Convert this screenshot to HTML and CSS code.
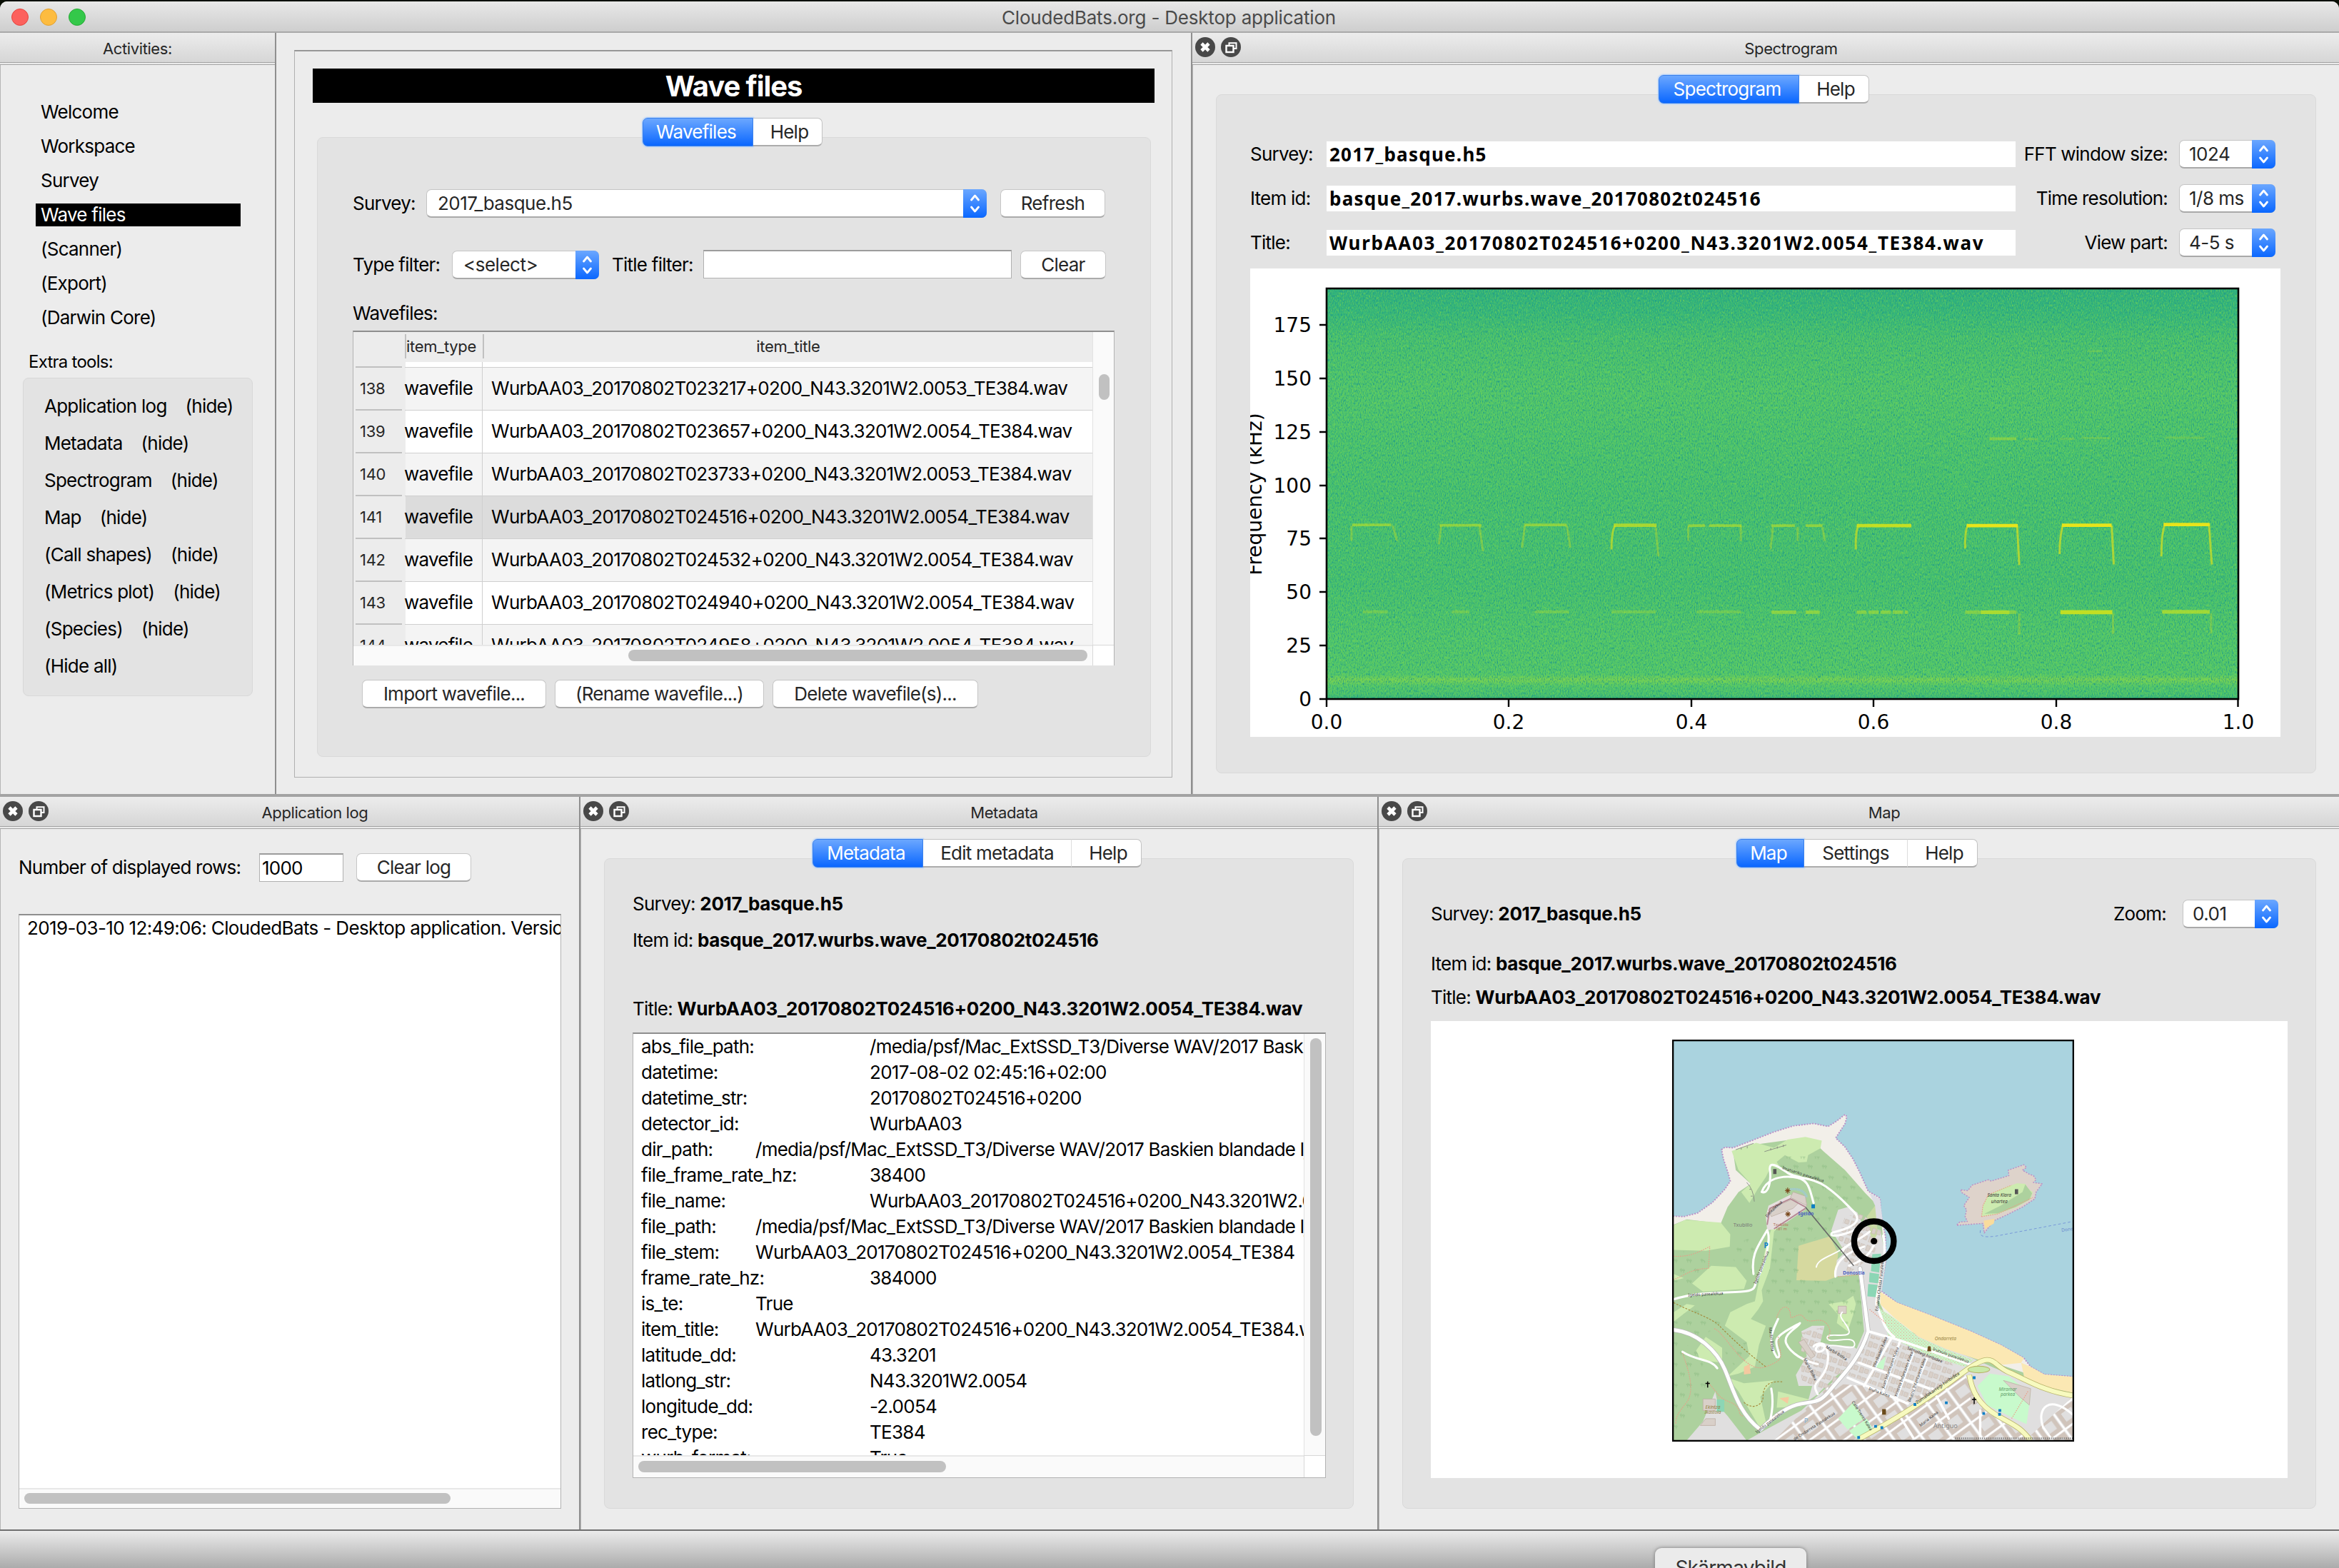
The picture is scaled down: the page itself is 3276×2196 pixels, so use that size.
FILE: index.html
```
<!DOCTYPE html>
<html lang="en">
<head>
<meta charset="utf-8">
<title>CloudedBats.org - Desktop application</title>
<link rel="stylesheet" href="styles.css">
</head>
<body>
<svg width="0" height="0" class="defs">
  <defs>
    <symbol id="close" viewBox="0 0 28 28"><circle cx="14" cy="14" r="14" fill="#484848"/><path d="M9 9 L19 19 M19 9 L9 19" stroke="#fff" stroke-width="4.6"/></symbol>
    <symbol id="float" viewBox="0 0 28 28"><circle cx="14" cy="14" r="14" fill="#484848"/><path d="M11.5 11 V8.2 H21.5 V16 H18" fill="none" stroke="#fff" stroke-width="2"/><rect x="7.5" y="12" width="10" height="9" fill="none" stroke="#fff" stroke-width="2.4"/></symbol>
    <symbol id="updown" viewBox="0 0 33 40"><path d="M11.5 15 L16.5 9 L21.5 15 M11.5 25 L16.5 31 L21.5 25" fill="none" stroke="#fff" stroke-width="2.8" stroke-linecap="round" stroke-linejoin="round"/></symbol>
  </defs>
</svg>
<div class="window">
  <header class="titlebar"><span class="lights"><i class="red"></i><i class="amber"></i><i class="green"></i></span><span class="title">CloudedBats.org - Desktop application</span></header>

  <div class="top">
    <aside class="activities">
      <div class="dock-head"><span>Activities:</span></div>
      <div class="side-body">
        <ul class="nav"><li>Welcome</li><li>Workspace</li><li>Survey</li><li class="on">Wave files</li><li>(Scanner)</li><li>(Export)</li><li>(Darwin Core)</li></ul>
        <div class="extra-label">Extra tools:</div>
        <ul class="extra"><li><span>Application log</span><span>(hide)</span></li><li><span>Metadata</span><span>(hide)</span></li><li><span>Spectrogram</span><span>(hide)</span></li><li><span>Map</span><span>(hide)</span></li><li><span>(Call shapes)</span><span>(hide)</span></li><li><span>(Metrics plot)</span><span>(hide)</span></li><li><span>(Species)</span><span>(hide)</span></li><li><span>(Hide all)</span></li></ul>
      </div>
    </aside>

    <main class="work">
      <div class="frame">
        <h1>Wave files</h1>
        <div class="tabs"><span class="tab on w155">Wavefiles</span><span class="tab w97">Help</span></div>
        <section class="group wave">
          <div class="row r1"><label>Survey:</label><div class="select wide"><span>2017_basque.h5</span><svg class="arrows"><use href="#updown"/></svg></div><button class="w147">Refresh</button></div>
          <div class="row r2"><label>Type filter:</label><div class="select type"><span>&lt;select&gt;</span><svg class="arrows"><use href="#updown"/></svg></div><label class="tf">Title filter:</label><div class="input filter"></div><button class="w120">Clear</button></div>
          <div class="cap">Wavefiles:</div>
          <div class="table">
            <div class="thead"><span class="c0"></span><span class="c1">item_type</span><span class="c2">item_title</span></div>
            <div class="tbody">
              <div class="tr gap"><span class="c0"></span><span class="c1"></span><span class="c2"></span></div>
              <div class="tr alt"><span class="c0">138</span><span class="c1">wavefile</span><span class="c2">WurbAA03_20170802T023217+0200_N43.3201W2.0053_TE384.wav</span></div>
              <div class="tr"><span class="c0">139</span><span class="c1">wavefile</span><span class="c2">WurbAA03_20170802T023657+0200_N43.3201W2.0054_TE384.wav</span></div>
              <div class="tr alt"><span class="c0">140</span><span class="c1">wavefile</span><span class="c2">WurbAA03_20170802T023733+0200_N43.3201W2.0053_TE384.wav</span></div>
              <div class="tr sel"><span class="c0">141</span><span class="c1">wavefile</span><span class="c2">WurbAA03_20170802T024516+0200_N43.3201W2.0054_TE384.wav</span></div>
              <div class="tr alt"><span class="c0">142</span><span class="c1">wavefile</span><span class="c2">WurbAA03_20170802T024532+0200_N43.3201W2.0054_TE384.wav</span></div>
              <div class="tr"><span class="c0">143</span><span class="c1">wavefile</span><span class="c2">WurbAA03_20170802T024940+0200_N43.3201W2.0054_TE384.wav</span></div>
              <div class="tr alt"><span class="c0">144</span><span class="c1">wavefile</span><span class="c2">WurbAA03_20170802T024958+0200_N43.3201W2.0054_TE384.wav</span></div>
            </div>
            <div class="vbar"><i></i></div>
            <div class="hbar"><i></i></div>
            <div class="corner"></div>
          </div>
          <div class="row r3"><button class="w258">Import wavefile...</button><button class="w293">(Rename wavefile...)</button><button class="w288">Delete wavefile(s)...</button></div>
        </section>
      </div>
    </main>

    <section class="dock spec">
      <div class="dock-head"><svg class="ic"><use href="#close"/></svg><svg class="ic"><use href="#float"/></svg><span>Spectrogram</span></div>
      <div class="dock-body">
        <div class="tabs"><span class="tab on w197">Spectrogram</span><span class="tab w98">Help</span></div>
        <div class="group specg">
          <div class="row"><label>Survey:</label><div class="field">2017_basque.h5</div><label class="rl">FFT window size:</label><div class="select small"><span>1024</span><svg class="arrows"><use href="#updown"/></svg></div></div>
          <div class="row"><label>Item id:</label><div class="field">basque_2017.wurbs.wave_20170802t024516</div><label class="rl">Time resolution:</label><div class="select small"><span>1/8 ms</span><svg class="arrows"><use href="#updown"/></svg></div></div>
          <div class="row"><label>Title:</label><div class="field long">WurbAA03_20170802T024516+0200_N43.3201W2.0054_TE384.wav</div><label class="rl">View part:</label><div class="select small"><span>4-5 s</span><svg class="arrows"><use href="#updown"/></svg></div></div>
          <svg class="plot" viewBox="1751 376 1443 656" width="1443" height="656">
            <defs>
              <linearGradient id="bg" x1="0" y1="0" x2="0" y2="1">
                <stop offset="0" stop-color="#2fb27c"/><stop offset=".06" stop-color="#37b878"/><stop offset=".12" stop-color="#48c16e"/><stop offset=".25" stop-color="#52c76a"/><stop offset=".5" stop-color="#48c26d"/><stop offset=".72" stop-color="#46c16e"/><stop offset=".85" stop-color="#51c76a"/><stop offset=".94" stop-color="#54c868"/><stop offset=".953" stop-color="#78d352"/><stop offset=".968" stop-color="#54c868"/><stop offset=".99" stop-color="#48c16e"/><stop offset="1" stop-color="#2fae7d"/>
              </linearGradient>
              <filter id="dark" x="0" y="0" width="1" height="1" color-interpolation-filters="sRGB"><feTurbulence type="fractalNoise" baseFrequency=".75 .3" numOctaves="2" seed="4"/><feColorMatrix values="0 0 0 0 .12  0 0 0 0 .6  0 0 0 0 .54  2.5 0 0 0 -1.15"/></filter>
              <filter id="lite" x="0" y="0" width="1" height="1" color-interpolation-filters="sRGB"><feTurbulence type="fractalNoise" baseFrequency=".7 .3" numOctaves="2" seed="9"/><feColorMatrix values="0 0 0 0 .5  0 0 0 0 .84  0 0 0 0 .3  1.8 0 0 0 -.82"/></filter>
            </defs>
            <rect x="1751" y="376" width="1443" height="656" fill="#fff"/>
            <rect x="1858" y="404" width="1277" height="575" fill="url(#bg)"/>
            <rect x="1858" y="404" width="1277" height="575" filter="url(#lite)"/>
            <rect x="1858" y="404" width="1277" height="575" filter="url(#dark)"/>
            <g transform="translate(1700 360) scale(.9949 .4847)" fill="none" stroke="#d8e219">
              <g stroke-width="8" stroke-opacity=".65"><path d="M195 774H250M318 775H377M437 774H497M668 776H692M697 776H743M785 776H818M833 776H857" stroke="#b5de2b"/></g>
              <g stroke-width="10"><path d="M563 775H623" stroke="#c2df23" stroke-opacity=".8"/><path d="M905 776H982" stroke="#d2e21b" stroke-opacity=".9"/><path d="M1060 776H1132M1194 775H1264M1337 773H1402" stroke="#e8e41b"/></g>
              <g stroke-width="3" stroke-opacity=".35"><path d="M194 776V820M252 776L258 820M320 776L317 830M374 776L379 850M438 776L434 840M497 776L502 840M622 776L626 865M668 776V820M742 776V820M787 780L784 845M822 780V820M857 780L860 820"/></g>
              <g stroke-width="3" stroke-opacity=".65"><path d="M565 776Q560 790 560 845M907 778Q903 800 904 845M1061 776Q1057 800 1058 842"/><path d="M1131 778L1134 890M1195 776Q1190 820 1191 858M1264 776L1267 888M1339 772Q1334 800 1334 865M1401 772L1405 888" stroke="#e5e419"/></g>
              <g stroke-width="9" stroke="#a5db36"><path d="M210 1025H245M335 1025H360M452 1025H500M560 1025H622M680 1025H742" stroke-opacity=".4"/><path d="M785 1026H820M833 1026H853" stroke-opacity=".7" stroke-width="10"/><path d="M905 1026H977" stroke-dasharray="14 3" stroke-width="10" stroke-opacity=".65"/><path d="M1058 1026H1130" stroke-opacity=".6" stroke-width="10"/><path d="M1080 1026H1120M1335 1025H1402" stroke="#b5de2b" stroke-width="11" stroke-opacity=".8"/><path d="M1192 1026H1265" stroke="#c2df23" stroke-width="12"/></g>
              <g stroke-width="8" stroke="#a5db36"><path d="M1092 525H1130" stroke-opacity=".6"/><path d="M1192 525H1212M1222 523H1262M1340 522H1395M1230 272H1250M1140 526H1160" stroke-opacity=".3" stroke-width="6"/></g>
              <path d="M1134 1030V1090M1266 1030V1090M1404 1030V1088" stroke-width="3" stroke-opacity=".3"/>
            </g>
            <rect x="1858" y="404" width="1277" height="575" fill="none" stroke="#000" stroke-width="2.6"/>
            <path d="M1848 979H1858M1848 904H1858M1848 829H1858M1848 754H1858M1848 680H1858M1848 605H1858M1848 530H1858M1848 455H1858M1858 979V990M2113 979V990M2369 979V990M2624 979V990M2880 979V990M3134.5 979V990" stroke="#000" stroke-width="2.4"/>
            <g class="tick" text-anchor="end"><text x="1837" y="989">0</text><text x="1837" y="914">25</text><text x="1837" y="839">50</text><text x="1837" y="764">75</text><text x="1837" y="690">100</text><text x="1837" y="615">125</text><text x="1837" y="540">150</text><text x="1837" y="465">175</text></g>
            <g class="tick" text-anchor="middle"><text x="1858" y="1021">0.0</text><text x="2113" y="1021">0.2</text><text x="2369" y="1021">0.4</text><text x="2624" y="1021">0.6</text><text x="2880" y="1021">0.8</text><text x="3135" y="1021">1.0</text><text transform="translate(1767 692) rotate(-90)">Frequency (kHz)</text></g>
          </svg>
        </div>
      </div>
    </section>
  </div>

  <div class="bottom">
    <section class="dock log">
      <div class="dock-head"><svg class="ic"><use href="#close"/></svg><svg class="ic"><use href="#float"/></svg><span>Application log</span></div>
      <div class="dock-body">
        <div class="row"><label>Number of displayed rows:</label><div class="input rows">1000</div><button class="w161">Clear log</button></div>
        <div class="loglist"><p>2019-03-10 12:49:06: CloudedBats - Desktop application. Version</p><div class="hbar"><i></i></div></div>
      </div>
    </section>

    <section class="dock meta">
      <div class="dock-head"><svg class="ic"><use href="#close"/></svg><svg class="ic"><use href="#float"/></svg><span>Metadata</span></div>
      <div class="dock-body">
        <div class="tabs"><span class="tab on w155">Metadata</span><span class="tab sep w208">Edit metadata</span><span class="tab w98">Help</span></div>
        <div class="group metag">
          <p class="m1">Survey: <b>2017_basque.h5</b></p>
          <p class="m2">Item id: <b>basque_2017.wurbs.wave_20170802t024516</b></p>
          <p class="m3">Title: <b>WurbAA03_20170802T024516+0200_N43.3201W2.0054_TE384.wav</b></p>
          <div class="text">
<pre>abs_file_path:	/media/psf/Mac_ExtSSD_T3/Diverse WAV/2017 Baskien
datetime:		2017-08-02 02:45:16+02:00
datetime_str:		20170802T024516+0200
detector_id:		WurbAA03
dir_path:	/media/psf/Mac_ExtSSD_T3/Diverse WAV/2017 Baskien blandade lj
file_frame_rate_hz:	38400
file_name:		WurbAA03_20170802T024516+0200_N43.3201W2.0054
file_path:	/media/psf/Mac_ExtSSD_T3/Diverse WAV/2017 Baskien blandade lj
file_stem:	WurbAA03_20170802T024516+0200_N43.3201W2.0054_TE384
frame_rate_hz:	384000
is_te:	True
item_title:	WurbAA03_20170802T024516+0200_N43.3201W2.0054_TE384.wav
latitude_dd:		43.3201
latlong_str:		N43.3201W2.0054
longitude_dd:		-2.0054
rec_type:		TE384
wurb_format:		True</pre>
            <div class="vbar"><i></i></div><div class="hbar"><i></i></div><div class="corner"></div>
          </div>
        </div>
      </div>
    </section>

    <section class="dock mapd">
      <div class="dock-head"><svg class="ic"><use href="#close"/></svg><svg class="ic"><use href="#float"/></svg><span>Map</span></div>
      <div class="dock-body">
        <div class="tabs"><span class="tab on w95">Map</span><span class="tab sep w145">Settings</span><span class="tab w98">Help</span></div>
        <div class="group mapg">
          <div class="row"><p>Survey: <b>2017_basque.h5</b></p><label>Zoom:</label><div class="select small"><span>0.01</span><svg class="arrows"><use href="#updown"/></svg></div></div>
          <p class="p2">Item id: <b>basque_2017.wurbs.wave_20170802t024516</b></p>
          <p class="p3">Title: <b>WurbAA03_20170802T024516+0200_N43.3201W2.0054_TE384.wav</b></p>
          <div class="canvas">
            <svg class="map" viewBox="57 42 1472 1472" width="563" height="563">
              <defs>
                <pattern id="trees" width="52" height="76" patternUnits="userSpaceOnUse"><path d="M10 22v-8M6 14a4 5 0 1 1 8 0zM20 24v-8M16 16a4 5 0 1 1 8 0zM38 58v-8M34 50a4 5 0 1 1 8 0zM47 60v-8M43 52a4 5 0 1 1 8 0z" fill="none" stroke="#8dbc82" stroke-width="1.6"/></pattern>
                <pattern id="dots" width="11" height="11" patternUnits="userSpaceOnUse"><circle cx="3" cy="3" r="2" fill="#eb9c8c"/><circle cx="8" cy="9" r="1.6" fill="#eb9c8c"/></pattern>
                <pattern id="blocks" width="41" height="33" patternUnits="userSpaceOnUse" patternTransform="rotate(19)"><rect x="4" y="5" width="13" height="20" fill="#d9d0c9" stroke="#c2b5aa" stroke-width="1.5"/><rect x="22" y="7" width="14" height="15" fill="#d9d0c9" stroke="#c2b5aa" stroke-width="1.5"/></pattern>
                <pattern id="bigblocks" width="88" height="74" patternUnits="userSpaceOnUse" patternTransform="rotate(-36)"><rect width="88" height="74" fill="#e0dfdf"/><path d="M8 8H68V58H8Z" fill="none" stroke="#d0c4bb" stroke-width="15"/><path d="M0 70H88M82 0V74" stroke="#fff" stroke-width="7"/></pattern>
                <clipPath id="box"><rect x="62" y="47" width="1462" height="1462"/></clipPath>
              </defs>
              <g clip-path="url(#box)" stroke-linejoin="round">
                <rect x="57" y="42" width="1472" height="1472" fill="#aad3df"/>
                <path d="M50 688L100 690 150 677 205 638 250 590 270 560 262 530 245 480 238 445 250 436 280 438 340 415 430 380 500 358 575 349 628 360 660 340 690 316 697 324 690 350 656 402 690 435 720 480 745 530 775 597 818 622 822 680 838 760 840 850 822 962 880 1005 1000 1050 1150 1110 1260 1160 1345 1208 1370 1240 1420 1268 1540 1277V1520H50Z" fill="#f2efe9" stroke="#bb8fc6" stroke-width="5" stroke-dasharray="5 5"/>
                <path d="M62 720L110 700 235 715 260 655 300 600 345 570 290 520 280 450 370 425 480 410 545 400 600 440 610 450 690 520 765 605 800 640 822 700 838 850 815 1000 850 1080 1160 1200 1340 1260 1524 1330V1510H62Z" fill="#add19e"/>
                <path d="M275 450L365 420 430 438 480 408 545 398 605 412 600 440 555 465 550 490 520 492 470 465 440 490 455 515 420 505 400 545 370 590 340 640 310 600 345 570 300 520ZM62 722L105 702 235 712 270 755 268 800 180 815 62 812ZM62 900L100 915 62 925ZM130 935L200 870 290 875 330 925 320 955 170 965ZM425 720L480 690 430 745 415 880 385 960 390 1000 372 1030 345 1065 400 1090 375 1160 360 1240 300 1265 260 1275 340 1200 330 1150 250 1090 270 1040 330 1010 360 1000 400 800ZM62 1040L110 1010 140 1015 62 1075ZM145 1180L180 1130 240 1170 240 1225 160 1215ZM630 1010L690 1000 720 980 730 1010 720 1050 700 1110 660 1080 665 1050ZM260 1280L320 1300 430 1290 380 1350 400 1440 385 1475 300 1330ZM445 1330L560 1360 530 1385 440 1390Z" fill="#cdebb0"/>
                <path d="M520 797L635 762 665 825 655 912 620 925 512 923Z" fill="#d6d99f"/>
                <path d="M640 740L665 665 700 655 735 675 755 720 820 740 840 850 825 960 805 1020 850 1080 1160 1210 1340 1290 1524 1340V1510H110L170 1440 215 1330 225 1380 260 1420 330 1510 400 1470 530 1400 640 1300 700 1250 760 1110 740 900 655 910 660 850 690 820ZM530 1110L570 1090 615 1090 600 1150 640 1160 720 1165 740 1180 700 1240 650 1280 590 1340 555 1365 570 1310 520 1310 510 1270 550 1200Z" fill="#e0dfdf"/>
                <path d="M400 690L410 650 490 610 550 640 545 665 440 735 405 740Z" fill="#e6dfdf"/>
                <path d="M780 605L818 625 828 705 795 700 800 650Z" fill="#dedde6"/><path d="M770 690L800 650 810 750 790 790Z" fill="#c9dba4"/>
                <path d="M62 820L130 815 200 870 130 935 62 930ZM268 800L360 760 350 900 290 875ZM62 1075L140 1015 250 1090 145 1130ZM240 1170L330 1150 300 1260ZM62 1130L145 1180 200 1290 130 1420 62 1490Z" fill="url(#trees)"/><path d="M460 470H620L770 620 650 660 620 750 520 800V920L650 930 740 900 760 1100 600 1060 400 980 430 760 600 690 560 560 450 530Z" fill="url(#trees)"/>
                <path d="M780 1120L1080 1225 1100 1270 960 1370 700 1270Z" fill="url(#blocks)"/><path d="M665 770L690 690 750 680 830 740 800 830 700 900Z" fill="url(#blocks)"/><path d="M530 1115L610 1095 600 1180 720 1180 700 1240 620 1330 530 1290Z" fill="url(#blocks)"/>
                <path d="M640 1300L760 1310 900 1370 1130 1270 1200 1400 1360 1500 1524 1350V1510H430L520 1420Z" fill="url(#bigblocks)"/>
                <path d="M818 965L880 1005 1000 1050 1150 1110 1260 1160 1345 1208 1335 1226 1270 1232 1190 1218 1060 1175 960 1130 870 1060 820 1012ZM1335 1225L1370 1240 1420 1268 1524 1277V1335L1350 1297Z" fill="#fbe8b3"/>
                <path d="M815 1025L870 1062 960 1132 1060 1177 1160 1215 1130 1240 1000 1200 850 1130Z" fill="#c8facc"/><path d="M815 1025L870 1062 960 1132 1060 1177 1160 1215 1130 1240 1000 1200 850 1130Z" fill="url(#dots)"/>
                <path d="M1175 1310L1220 1265 1290 1275 1370 1340 1355 1450 1310 1430 1210 1380ZM665 1430L720 1370 760 1430 700 1470ZM705 1475L770 1430 800 1480 740 1510ZM800 1240L840 1200 830 1250Z" fill="#c8facc"/>
                <path d="M790 828L822 826 815 895 785 890ZM780 895L815 900 812 935 778 930ZM775 937L810 940 805 985 772 982ZM220 1360H248V1405H220Z" fill="#8cd6b5"/>
                <path d="M170 1358H215V1400H170ZM180 1430H215V1455H160ZM410 665L500 625 520 640 500 660 420 690ZM1270 1290L1370 1320 1365 1380 1330 1350ZM1148 1345L1180 1340 1185 1365 1160 1380ZM665 1018H695V1045H665ZM520 1150L540 1140 580 1200 565 1210ZM500 600L545 615 550 650 490 620Z" fill="#d9d0c9" stroke="#bcaea3" stroke-width="2"/>
                <path d="M320 1240L340 1230 345 1265 320 1268ZM450 1355L485 1350 480 1375Z" fill="#f5c9a0"/>
                <g fill="none" stroke="#bbb" stroke-linecap="round"><path d="M62 1105C150 1115 220 1180 250 1250S300 1410 380 1470C410 1440 470 1385 530 1375S600 1370 640 1320 740 1220 775 1110L745 880" stroke-width="17"/></g>
                <g fill="none" stroke="#fff" stroke-linecap="round">
                  <path d="M62 1105C150 1115 220 1180 250 1250S300 1410 380 1470C410 1440 470 1385 530 1375S600 1370 640 1320 740 1220 775 1110L745 880" stroke-width="13"/>
                  <path d="M62 993C150 965 240 970 310 965S350 940 375 905C400 850 420 770 405 740M405 740C370 800 345 830 355 900M385 600C400 560 440 540 500 545S560 590 575 640M385 600C410 610 420 560 415 520S450 510 480 530 570 545 620 580 690 640 720 670 730 720 690 735 640 745 640 755 700 760 760 720M445 1065C430 1100 400 1140 440 1205C465 1210 430 1160 440 1140S480 1105 525 1080C520 1095 460 1120 475 1155S540 1220 590 1230M575 1165C590 1150 620 1150 615 1170S575 1190 585 1170 640 1160 625 1230 560 1290 590 1340M680 820C690 790 740 780 780 745M705 870C760 850 790 820 800 780M655 910C650 870 670 830 760 800M95 1185C150 1220 200 1210 222 1245M420 1320C430 1370 420 1420 415 1440M1524 1415C1440 1340 1390 1390 1415 1460L1450 1510" stroke-width="8"/>
                  <path d="M680 1040C660 1060 700 1080 705 1110S620 1110 625 1135 720 1120 725 1155 650 1150 630 1165M585 875C590 840 660 830 690 800" stroke-width="5"/>
                  <path d="M775 1110L880 1140 1160 1235M740 1225L1000 1320M700 1280L920 1375M860 1135L760 1310M890 1150L830 1330M940 1190L880 1350M990 1210L930 1350M1010 1320L1070 1430M890 1420L940 1500M1185 1400V1510M805 1010C830 1080 840 1110 870 1130M830 760C850 850 805 940 805 1010" stroke-width="9"/>
                </g>
                <path d="M740 1505C860 1440 980 1370 1110 1270S1220 1230 1290 1260 1420 1330 1524 1345M1145 1270C1155 1330 1180 1380 1250 1420S1330 1460 1370 1510" fill="none" stroke="#b9b56b" stroke-width="20"/><path d="M740 1505C860 1440 980 1370 1110 1270S1220 1230 1290 1260 1420 1330 1524 1345M1145 1270C1155 1330 1180 1380 1250 1420S1330 1460 1370 1510" fill="none" stroke="#f7fabf" stroke-width="16"/>
                <ellipse cx="1180" cy="1250" rx="40" ry="12" fill="#c8e9a8" stroke="#b9b56b" stroke-width="3"/>
                <g fill="none" stroke="#ec9a86" stroke-width="3" stroke-dasharray="4 4"><path d="M62 835C130 840 170 810 195 800L190 880C120 880 90 915 62 920M440 1060C460 1000 490 1020 490 1050S520 1030 540 1060 600 1050 625 1085 620 1130 630 1140M95 1190C120 1260 140 1330 110 1370S70 1420 70 1450M190 1300C230 1340 220 1350 270 1370S290 1420 320 1420M445 1130C450 1200 480 1210 400 1240S250 1110 210 1100M665 910L740 903M780 1030L840 1080M1360 1330L1300 1430"/></g>
                <g fill="none" stroke="#a3893a" stroke-width="3" stroke-dasharray="7 5"><path d="M62 1005C130 1040 200 1060 230 1090S320 1180 400 1240M320 1370C350 1400 390 1380 390 1350S400 1290 460 1295"/></g>
                <path d="M405 720L415 660 490 625 545 655M430 735L545 660" fill="none" stroke="#b58a94" stroke-width="5"/>
                <path d="M490 590Q540 585 550 620" fill="none" stroke="#9fc9d6" stroke-width="9" stroke-dasharray="4 2"/>
                <path d="M545 655L722 870" stroke="#666" stroke-width="4"/>
                <g fill="none" stroke="#777" stroke-width="2"><path d="M290 445L355 422M395 452L475 428M330 565Q355 590 358 635M310 445v-8M332 440v-8M418 447v-8M442 441v-8M464 435v-8M340 590h6M345 615h7"/></g>
                <path d="M1115 592L1140 595 1155 575 1215 555 1225 560 1290 540 1288 520 1345 500 1355 510 1340 520 1365 535 1380 540 1390 555 1380 565 1412 570 1390 600 1385 625 1340 655 1280 685 1235 705 1200 750 1195 715 1098 722 1110 710 1138 708 1130 690 1135 665 1125 650 1145 620 1115 600Z" fill="#ded3cb" stroke="#bb8fc6" stroke-width="4" stroke-dasharray="5 5"/>
                <path d="M1190 690L1195 650 1215 610 1270 585 1320 568 1350 570 1362 590 1378 600 1370 625 1320 655 1250 680Z" fill="#cdebb0"/><path d="M1200 680L1260 650 1340 600 1350 572 1375 605 1365 628 1315 655 1250 678Z" fill="#add19e"/><path d="M1190 690L1195 650 1215 610 1300 575M1190 690L1250 680 1378 620" fill="none" stroke="#ec9a86" stroke-width="3" stroke-dasharray="4 4"/><path d="M1198 705L1238 698 1235 715 1203 735Z" fill="#f9dc9c"/>
                <path d="M1186 740C1180 765 1200 766 1240 762L1524 708" fill="none" stroke="#7495d8" stroke-width="2.5" stroke-dasharray="10 8"/>
                <g fill="#0d7ec5"><path d="M567 645h13v15h-13zM941 1373h10v10h-10zM1056 1367h10v10h-10zM1158 1275h10v10h-10zM1193 1406h10v10h-10zM1252 1395h10v10h-10zM1251 1409h10v10h-10zM797 1453h10v10h-10zM820 1458h10v10h-10zM735 1494h10v10h-10z"/></g>
                <g fill="#6b4b1a"><path d="M994 1165h9l3 18h-15zM826 1395h14v20h-14z"/></g><g fill="#555"><path d="M427 516h12v18h-12zM1312 590h12v18h-12z"/></g>
                <path d="M187 1294V1316M179 1301H195M1163 1352V1376M1155 1360H1171" stroke="#000" stroke-width="4"/>
                <path d="M480 584V606M470 595H490M473 588L487 602M487 588L473 602M481 670V692M471 681H491M474 674L488 688M488 674L474 688" stroke="#79491d" stroke-width="3"/>
                <path d="M1094 1502H1524" stroke="#666" stroke-width="6" stroke-dasharray="3 4"/>
                <g class="maptext" text-anchor="middle">
                  <text x="316" y="727" font-size="19" fill="#777">Txubillo</text><text x="455" y="725" font-size="15" fill="#ae6d52">Txubillo</text><text x="457" y="741" font-size="14" fill="#ae6d52">181 m</text>
                  <text x="547" y="685" font-size="18" fill="#4c5fc0" class="hv">Igeldo</text><text x="722" y="903" font-size="18" fill="#4c5fc0" class="hv">Donostia</text>
                  <text x="1255" y="617" class="it">Santa Klara</text><text x="1255" y="640" class="it">uhartea</text><text x="1505" y="743" font-size="17" fill="#6c8bd0" transform="rotate(-8 1505 743)">Dono</text>
                  <text x="1058" y="1142" class="it sand">Ondarreta</text><text x="1286" y="1329" class="it park">Miramar</text><text x="1286" y="1347" class="it park">parkea</text>
                  <text x="206" y="1393" class="it sand">Ekintza</text><text x="206" y="1411" class="it sand">Ikastola</text><text x="1058" y="1464" font-size="24" fill="#888">Antiguo</text>
                  <text x="401" y="805" font-size="26" fill="#0d7ec5" class="hv">P</text><text x="547" y="1447" font-size="24" fill="#7fb3da">P</text>
                  <text transform="translate(180 979) rotate(-3)">Igeldo pasealekua</text><text transform="translate(388 878) rotate(-68)">Igeldo pasealekua</text><text transform="translate(418 1445) rotate(-38)">Igeldo pasealekua</text>
                  <text transform="translate(535 540) rotate(18)">Imatsariko pasealekua</text><text transform="translate(432 665) rotate(-42)">pasealekua</text>
                  <text transform="translate(416 1140) rotate(84)">Marbil Bidea</text><text transform="translate(656 1194) rotate(32)">Marbil Bidea</text><text transform="translate(558 1252) rotate(62)">Marbil Bidea</text>
                  <text transform="translate(823 938) rotate(-83)">Eduardo Chillida Pasealekua</text><text transform="translate(823 1188) rotate(-68)">Wiesbaden Kalea</text><text transform="translate(860 1245) rotate(-70)">Juan Infantearen Kalea</text><text transform="translate(910 1268) rotate(-70)">Kristina Infantaren Kalea</text><text transform="translate(958 1290) rotate(-70)">Beatriz Infantaren Kalea</text>
                  <text transform="translate(980 1200) rotate(22)">Satrustegi hiribidea</text><text transform="translate(1076 1203) rotate(20)">Irutxulo pasealekua</text><text transform="translate(814 1338) rotate(20)">Iruña Kalea</text><text transform="translate(1032 1322) rotate(-35)" font-size="17">Zumalakarregi hiribidea</text><text transform="translate(748 1422) rotate(57)">Calle Trento Kalea</text><text transform="translate(1000 1434) rotate(-38)">Maria Kalea</text><text transform="translate(580 1462) rotate(-33)">de Ondarreta Pasealekua</text>
                </g>
                <circle cx="796" cy="780" r="72.500" fill="none" stroke="#000" stroke-width="22"/><circle cx="796" cy="780" r="12"/>
              </g>
              <rect x="60" y="45" width="1466" height="1466" fill="none" stroke="#000" stroke-width="6"/>
            </svg>
          </div>
        </div>
      </div>
    </section>
  </div>
  <footer class="status"><span class="chip">Skärmavbild</span></footer>
</div>
</body>
</html>
```
FILE: styles.css
```
* { box-sizing: border-box; }
body { margin: 0; width: 3276px; height: 2196px; overflow: hidden; background: #0a0f06; font: 400 26px/40px Inter, "Noto Sans", sans-serif; letter-spacing: -.76px; color: #000; }
p, h1, ul, pre { margin: 0; padding: 0; }
ul { list-style: none; }
b { letter-spacing: -.34px; }
.defs { display: block; position: absolute; }
.window { display: flex; flex-direction: column; height: 2194px; margin-top: 2px; border-radius: 10px 10px 0 0; overflow: hidden; background: #ececec; }
.titlebar { display: grid; grid-template-columns: 1fr auto 1fr; align-items: center; height: 44px; padding: 0 16px; background: linear-gradient(#e8e8e8, #cecece); border-bottom: 2px solid #a9a9a9; flex: none; }
.lights { display: flex; gap: 16px; }
.lights i { width: 24px; height: 24px; border-radius: 50%; border: 1px solid #e2463f; background: #fc615d; }
.lights .amber { background: #fdbc40; border-color: #e0a033; }
.lights .green { background: #34c84a; border-color: #27aa35; }
.title { color: #4a4a4a; letter-spacing: -.2px; padding: 3px 2px 0 0; }
.top { display: flex; height: 1066px; flex: none; }
.bottom { display: flex; height: 1030px; flex: none; border-top: 4px solid #a3a3a3; }
.dock-head { position: relative; display: flex; align-items: center; justify-content: center; height: 45px; padding: 2px 0 0 71px; background: linear-gradient(#ececec, #d6d6d6); border-bottom: 4px double #a2a2a2; font-size: 22px; letter-spacing: -.4px; color: #262626; flex: none; }
.activities .dock-head { padding-left: 0; }
.ic { position: absolute; left: 4px; top: 6px; width: 28px; height: 28px; }
.ic + .ic { left: 40px; }
.activities { width: 387px; border-right: 2px solid #8f8f8f; display: flex; flex-direction: column; }
.side-body { flex: 1; border-left: 1px solid #b5b5b5; }
.nav { margin: 50px 48px 0 49px; }
.nav li { height: 32px; margin-bottom: 16px; padding-left: 7px; line-height: 32px; }
.nav .on { background: #000; color: #fff; }
.extra-label { margin: 34px 0 0 39px; font-size: 24px; line-height: 24px; }
.extra { margin: 10px 31px 0 31px; height: 446px; padding: 19px 0 0 29px; background: #e3e3e3; border: 1px solid #d8d8d8; border-radius: 8px; }
.extra li { display: flex; gap: 26px; height: 52px; line-height: 40px; white-space: nowrap; }
.work { width: 1283px; padding: 24px 26px 23px 25px; border-right: 2px solid #8f8f8f; }
.frame { height: 1019px; border: 1px solid #b0b0b0; border-top: 2px solid #979797; padding: 24px 24px 0 25px; }
h1 { height: 48px; background: #000; color: #fff; font: 700 40px/50px Inter, sans-serif; text-align: center; letter-spacing: -1.1px; }
.tabs { display: flex; justify-content: center; height: 40px; position: relative; z-index: 1; }
.frame .tabs { margin-top: 21px; padding-right: 3px; }
.tab { background: #fff; color: #262626; text-align: center; border: 1px solid #c2c2c2; border-bottom: 2px solid #acacac; border-left: 0; line-height: 38px; }
.tab.on { background: linear-gradient(#6ba7ff, #0a67ff); color: #fff; border: 1px solid #3a80ea; border-radius: 7px 0 0 7px; box-shadow: 0 0 2px 1px #a9cdff; padding-right: 5px; }
.tab:last-child { border-radius: 0 7px 7px 0; padding-left: 5px; }
.group { background: #e3e3e3; border: 1px solid #d9d9d9; border-radius: 8px; margin-top: -13px; }
.wave { margin-left: 6px; margin-right: 5px; height: 868px; padding: 72px 50px 0 49px; }
.row { display: flex; height: 40px; white-space: nowrap; }
.select { display: flex; height: 40px; background: #fff; border: 1px solid #c4c4c4; border-bottom: 2px solid #a9a9a9; border-radius: 7px; color: #262626; line-height: 38px; padding-left: 15px; justify-content: space-between; letter-spacing: -.5px; }
.select span { white-space: nowrap; }
.arrows { width: 33px; height: 40px; margin: -1px -1px 0 0; background: linear-gradient(#6ba7ff, #0a67ff); border-radius: 0 7px 7px 0; flex: none; }
button { height: 40px; padding: 0; background: #fff; border: 1px solid #c6c6c6; border-bottom: 2px solid #ababab; border-radius: 7px; font: inherit; line-height: 38px; letter-spacing: inherit; color: #262626; }
.input { background: #fff; border: 1px solid #b0b0b0; border-top: 2px solid #9c9c9c; height: 40px; line-height: 38px; }
.r1 label { width: 103px; }
.wide { width: 785px; margin-right: 19px; }
.r2 { margin-top: 46px; }
.r2 label { width: 139px; }
.type { width: 206px; }
.r2 .tf { margin-left: 18px; width: 128px; }
.filter { width: 432px; margin: -1px 12px 0 0; }
.cap { height: 40px; margin: 28px 0 4px; }
.table { display: grid; grid-template: 438px 29px / 1035px 30px; width: 1067px; height: 469px; border: 1px solid #b3b3b3; border-top: 2px solid #8e8e8e; background: #ececec; position: relative; }
.thead { grid-area: 1 / 1; height: 42px; display: flex; font-size: 22px; letter-spacing: -.3px; line-height: 34px; color: #262626; padding-top: 3px; }
.thead .c1, .thead .c2 { height: 34px; border-left: 2px solid #c0c0c0; }
.thead .c2 { text-align: center; }
.tbody { grid-area: 1 / 1; margin-top: 42px; overflow: hidden; height: 396px; }
.c0 { width: 72px; flex: none; }
.c1 { width: 109px; flex: none; }
.c2 { flex: 1; }
.tr { display: flex; height: 60px; line-height: 58px; background: #fff; }
.tr .c0 { background: #ececec; color: #262626; font-size: 22px; letter-spacing: -.3px; padding-left: 6px; border-bottom: 2px solid #c0c0c0; box-shadow: 5px 0 #ececec, -4px 0 #ececec; margin-left: 3px; margin-right: 4px; width: 65px; }
.tr .c1, .tr .c2 { border-bottom: 1px solid #cfcfcf; }
.tr .c1 { border-right: 1px solid #cfcfcf; text-indent: -1px; }
.tr .c2 { padding-left: 12px; letter-spacing: -.72px; }
.tr.gap { height: 8px; }
.tr.alt { background: #f4f4f4; }
.tr.sel { background: #dcdcdc; }
.vbar, .hbar { background: #fafafa; position: relative; }
.vbar { grid-area: 1 / 2; border-left: 1px solid #e2e2e2; }
.hbar { grid-area: 2 / 1; border-top: 2px solid #e8e8e8; }
.vbar i, .hbar i { position: absolute; background: #c1c1c1; border-radius: 8px; }
.corner { grid-area: 2 / 2; background: #fff; border-left: 1px solid #d8d8d8; border-top: 1px solid #d8d8d8; }
.table .vbar i { left: 8px; width: 15px; top: 59px; height: 36px; }
.table .hbar i { left: 385px; width: 643px; top: 5px; height: 16px; }
.r3 { margin: 20px 0 0 13px; gap: 12px; }
.w95 { width: 95px; } .w97 { width: 97px; } .w98 { width: 98px; } .w120 { width: 120px; } .w145 { width: 145px; } .w147 { width: 147px; } .w155 { width: 155px; } .w161 { width: 161px; } .w197 { width: 197px; } .w208 { width: 208px; } .w258 { width: 258px; } .w288 { width: 288px; } .w293 { width: 293px; }
.spec { width: 1606px; }
.dock { display: flex; flex-direction: column; }
.dock-body { flex: 1; border-left: 1px solid #b5b5b5; }
.spec .tabs { margin-top: 14px; padding-right: 6px; }
.specg { margin-left: 32px; margin-right: 32px; height: 951px; padding: 63px 48px 0 47px; }
.specg .row { margin-bottom: 22px; }
.specg label { width: 107px; }
.specg .rl { flex: 1; text-align: right; padding-right: 16px; letter-spacing: -.8px; }
.field { width: 965px; height: 36px; margin-top: 2px; background: #fff; padding-left: 4px; font: 700 26px/36px "Noto Sans", sans-serif; letter-spacing: 1.25px; }
.long { letter-spacing: 1.7px; }
.small { width: 135px; padding-left: 13px; }
.specg .small { margin-right: 8px; }
.plot { display: block; margin-top: -6px; }
.tick { font: 28px "DejaVu Sans", sans-serif; letter-spacing: 0; }
.log { width: 814px; border-right: 2px solid #8f8f8f; }
.log .row { margin: 34px 0 0 25px; }
.log label { width: 337px; }
.rows { width: 118px; margin-right: 18px; padding-left: 3px; }
.loglist { margin: 45px 0 0 25px; width: 760px; height: 833px; background: #fff; border: 1px solid #b3b3b3; border-top: 2px solid #8e8e8e; display: flex; flex-direction: column; justify-content: space-between; overflow: hidden; }
.loglist p { padding-left: 11px; line-height: 35px; white-space: nowrap; letter-spacing: -.64px; }
.loglist .hbar { height: 28px; flex: none; }
.loglist .hbar i { left: 7px; width: 597px; top: 5px; height: 15px; }
.meta { width: 1118px; border-right: 2px solid #8f8f8f; }
.bottom .tabs { margin-top: 14px; padding-right: 6px; }
.sep { border-right-color: #ddd; }
.metag { margin-left: 32px; margin-right: 33px; height: 911px; padding: 43px 39px 0; }
.m2 { margin-top: 11px; }
.m3 { margin-top: 56px; }
.text { margin-top: 13px; display: grid; grid-template: 590px 31px / 939px 30px; width: 971px; height: 624px; border: 1px solid #b3b3b3; border-top: 2px solid #8e8e8e; background: #fff; }
.text pre { grid-area: 1 / 1; font: inherit; line-height: 36px; tab-size: 160px; letter-spacing: -.73px; padding-left: 11px; overflow: hidden; height: 590px; }
.text .vbar i { left: 8px; width: 16px; top: 6px; height: 557px; }
.text .hbar i { left: 7px; width: 431px; top: 6px; height: 16px; }
.mapd { flex: 1; }
.mapg { margin-left: 32px; margin-right: 32px; height: 911px; padding: 57px 39px 0; }
.mapg .row p { flex: 1; }
.mapg label { width: 97px; }
.mapg .small { margin-right: 13px; width: 134px; }
.p2 { margin-top: 30px; }
.p3 { margin-top: 7px; }
.canvas { width: 1200px; height: 640px; margin-top: 13px; background: #fff; padding: 26px 0 0 338px; }
.map { display: block; }
.maptext { font: 15px "Noto Sans", sans-serif; fill: #333; letter-spacing: 0; }
.it { font-style: italic; font-size: 17px; }
.sand { fill: #94803f; }
.park { fill: #5f9a66; }
.hv { font-weight: 700; }
.status { flex: 1; border-top: 2px solid #6f6f6f; background: linear-gradient(#ebebeb, #ababab); padding: 24px 0 0 2318px; overflow: hidden; }
.chip { display: block; width: 212px; height: 50px; border-radius: 9px; background: #ebebeb; box-shadow: 0 0 5px #777; text-align: center; font-size: 28px; line-height: 56px; color: #333; }
```
